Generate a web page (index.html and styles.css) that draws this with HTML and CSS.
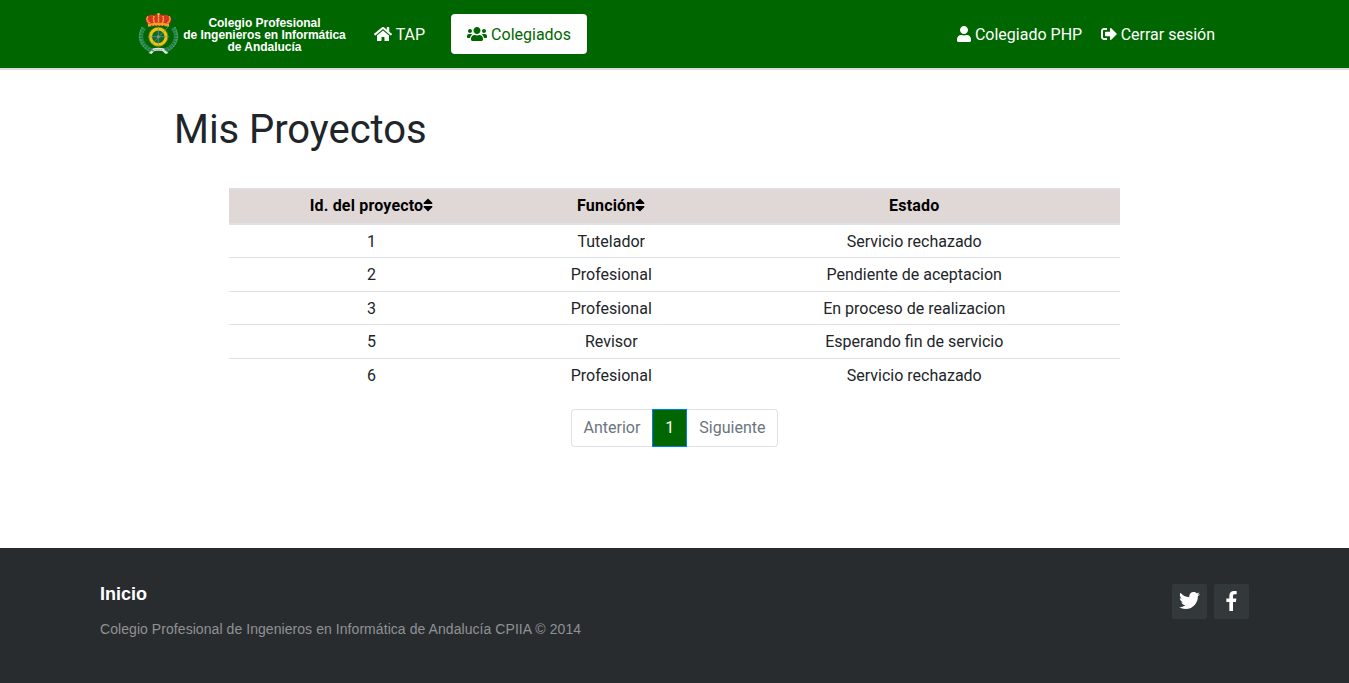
FILE: index.html
```html
<!DOCTYPE html>
<html lang="es">
<head>
<meta charset="utf-8">
<title>Mis Proyectos</title>
<link rel="stylesheet" href="styles.css">
</head>
<body>
<header class="navbar">
  <a class="brand">
    <svg class="emblem" viewBox="0 0 41 42">
      <g fill="none" stroke="#2f8c5c" stroke-width="4.400" stroke-dasharray="2.400 .5">
        <path d="M6 15C0 23 3 33 14 37.500"/>
        <path d="M35 15C41 23 38 33 27 37.500"/>
      </g>
      <g fill="none" stroke="#8bbfa5" stroke-width=".7" stroke-dasharray="1.200 1.300">
        <path d="M4 14C-1 24 2 34 13 39M37 14C42 24 39 34 28 39"/>
      </g>
      <circle cx="20.300" cy="23.700" r="7.900" fill="#0f6a22" stroke="#f0c40c" stroke-width="3.200"/>
      <circle cx="20.300" cy="23.700" r="9.600" fill="none" stroke="#a07c14" stroke-width=".6"/>
      <path d="M20.300 15v18M10 23.700h21M14 31l16-17" stroke="#6f98a0" stroke-width=".7"/>
      <circle cx="20.300" cy="23.700" r="1.500" fill="#7694a2"/>
      <path d="M10 3c-3.500 2-2.500 5.500 0 8.500h21c2.500-3 3.500-6.500 0-8.500-2-1.500-5-1.500-6.500-.5-1-2-7-2-8 0-1.500-1-4.500-1-6.500.5z" fill="#d8341f"/>
      <path d="M10 3.500c-2.500 2 0 5 2 7.500M31 3.500c2.500 2 0 5-2 7.500M16 3c-1 3 0 6 1 8M25 3c1 3 0 6-1 8M20.500 1v10" stroke="#f0bd42" stroke-width="1.500" stroke-dasharray="1.500 .6" fill="none"/>
      <path d="M10 11q10.500-2.500 21 0v2.700q-10.500-2-21 0z" fill="#e9a628"/>
      <path d="M13 12.500h15" stroke="#c7392b" stroke-width="1" stroke-dasharray="1.500 1.500"/>
      <path d="M20.500 0v3M19 1h3" stroke="#f0bd42"/>
      <path d="M14.500 35.500q6-1.500 12 0v3q-6-1.500-12 0zM14.500 37l-4 3 3 1 3-3M26.500 37l4 3-3 1-3-3" fill="#dce5e1"/>
      <path d="M16.500 36.800h8" stroke="#6d7b76" stroke-width=".8" stroke-dasharray="1 .6"/>
    </svg>
    <span class="brand-text">Colegio Profesional<br>de Ingenieros en Informática<br>de Andalucía</span>
  </a>
  <nav class="nav-main">
    <a class="nav-link"><svg class="icon icon-home" viewBox="0 0 576 512"><path d="M280.370 148.260L96 300.110V464a16 16 0 0 0 16 16l112.060-.29a16 16 0 0 0 15.920-16V368a16 16 0 0 1 16-16h64a16 16 0 0 1 16 16v95.640a16 16 0 0 0 16 16.050L464 480a16 16 0 0 0 16-16V300L295.670 148.260a12.190 12.190 0 0 0-15.300 0zM571.600 251.470L488 182.560V44.050a12 12 0 0 0-12-12h-56a12 12 0 0 0-12 12v72.610L318.470 43a48 48 0 0 0-61 0L4.340 251.470a12 12 0 0 0-1.600 16.900l25.500 31A12 12 0 0 0 45.150 301l235.220-193.740a12.190 12.190 0 0 1 15.300 0L530.900 301a12 12 0 0 0 16.900-1.600l25.500-31a12 12 0 0 0-1.700-16.930z"/></svg> TAP</a>
    <a class="nav-link active"><svg class="icon icon-users" viewBox="0 0 640 512"><path d="M96 224c35.300 0 64-28.700 64-64s-28.700-64-64-64-64 28.700-64 64 28.700 64 64 64zm448 0c35.300 0 64-28.700 64-64s-28.700-64-64-64-64 28.700-64 64 28.700 64 64 64zm32 32h-64c-17.600 0-33.500 7.100-45.100 18.600 40.300 22.100 68.900 62 75.100 109.400h66c17.700 0 32-14.300 32-32v-32c0-35.300-28.700-64-64-64zm-256 0c61.900 0 112-50.100 112-112S381.900 32 320 32 208 82.100 208 144s50.100 112 112 112zm76.800 32h-8.300c-20.800 10-43.900 16-68.500 16s-47.600-6-68.500-16h-8.300C179.600 288 128 339.600 128 403.200V432c0 26.500 21.500 48 48 48h288c26.500 0 48-21.500 48-48v-28.800c0-63.600-51.600-115.200-115.200-115.200zm-223.700-13.400C161.500 263.100 145.600 256 128 256H64c-35.300 0-64 28.700-64 64v32c0 17.700 14.300 32 32 32h65.900c6.300-47.400 34.900-87.300 75.200-109.400z"/></svg> Colegiados</a>
  </nav>
  <nav class="nav-user">
    <a><svg class="icon icon-user" viewBox="0 0 448 512"><path d="M224 256c70.700 0 128-57.300 128-128S294.700 0 224 0 96 57.300 96 128s57.300 128 128 128zm89.600 32h-16.700c-22.200 10.200-46.900 16-72.900 16s-50.600-5.800-72.900-16h-16.700C60.200 288 0 348.200 0 422.400V464c0 26.500 21.500 48 48 48h352c26.500 0 48-21.500 48-48v-41.600c0-74.200-60.200-134.400-134.400-134.400z"/></svg> Colegiado PHP</a>
    <a><svg class="icon icon-exit" viewBox="0 0 512 512"><path d="M497 273L329 441c-15 15-41 4.500-41-17v-96H152c-13.300 0-24-10.700-24-24v-96c0-13.300 10.700-24 24-24h136V88c0-21.400 25.900-32 41-17l168 168c9.300 9.400 9.300 24.600 0 34zM192 436v-40c0-6.600-5.400-12-12-12H96c-17.700 0-32-14.300-32-32V160c0-17.700 14.300-32 32-32h84c6.600 0 12-5.400 12-12V76c0-6.600-5.400-12-12-12H96c-53 0-96 43-96 96v192c0 53 43 96 96 96h84c6.600 0 12-5.400 12-12z"/></svg> Cerrar sesión</a>
  </nav>
</header>
<main class="content">
  <h1 class="title">Mis Proyectos</h1>
  <table class="projects">
    <colgroup><col class="col-id"><col class="col-role"><col class="col-state"></colgroup>
    <thead>
      <tr>
        <th>Id. del proyecto<svg class="icon icon-sort" viewBox="0 0 320 512"><path d="M41 288h238c21.400 0 32.100 25.900 17 41L177 448c-9.400 9.400-24.600 9.400-33.900 0L24 329c-15.100-15.100-4.400-41 17-41zm255-105L177 64c-9.400-9.400-24.600-9.400-33.900 0L24 183c-15.100 15.100-4.400 41 17 41h238c21.400 0 32.100-25.900 17-41z"/></svg></th>
        <th>Función<svg class="icon icon-sort" viewBox="0 0 320 512"><path d="M41 288h238c21.400 0 32.100 25.900 17 41L177 448c-9.400 9.400-24.600 9.400-33.900 0L24 329c-15.100-15.100-4.400-41 17-41zm255-105L177 64c-9.400-9.400-24.600-9.400-33.900 0L24 183c-15.100 15.100-4.400 41 17 41h238c21.400 0 32.100-25.900 17-41z"/></svg></th>
        <th>Estado</th>
      </tr>
    </thead>
    <tbody>
      <tr><td>1</td><td>Tutelador</td><td>Servicio rechazado</td></tr>
      <tr><td>2</td><td>Profesional</td><td>Pendiente de aceptacion</td></tr>
      <tr><td>3</td><td>Profesional</td><td>En proceso de realizacion</td></tr>
      <tr><td>5</td><td>Revisor</td><td>Esperando fin de servicio</td></tr>
      <tr><td>6</td><td>Profesional</td><td>Servicio rechazado</td></tr>
    </tbody>
  </table>
  <div class="pagination">
    <span class="page first">Anterior</span>
    <span class="page current">1</span>
    <span class="page last">Siguiente</span>
  </div>
</main>
<footer class="footer">
  <div>
    <p class="footer-link">Inicio</p>
    <p class="footer-copy">Colegio Profesional de Ingenieros en Informática de Andalucía CPIIA © 2014</p>
  </div>
  <div class="social">
    <a class="social-link"><svg class="icon icon-twitter" viewBox="0 0 512 512"><path d="M459.370 151.716c.325 4.548.325 9.097.325 13.645 0 138.720-105.583 298.558-298.558 298.558-59.452 0-114.680-17.219-161.137-47.106 8.447.974 16.568 1.299 25.340 1.299 49.055 0 94.213-16.568 130.274-44.832-46.132-.975-84.792-31.188-98.112-72.772 6.498.974 12.995 1.624 19.818 1.624 9.421 0 18.843-1.300 27.614-3.573-48.081-9.747-84.143-51.980-84.143-102.985v-1.299c13.969 7.797 30.214 12.670 47.431 13.319-28.264-18.843-46.781-51.005-46.781-87.391 0-19.492 5.197-37.360 14.294-52.954 51.655 63.675 129.300 105.258 216.365 109.807-1.624-7.797-2.599-15.918-2.599-24.040 0-57.828 46.782-104.934 104.934-104.934 30.213 0 57.502 12.670 76.670 33.137 23.715-4.548 46.456-13.320 66.599-25.340-7.798 24.366-24.366 44.833-46.132 57.827 21.117-2.273 41.584-8.122 60.426-16.243-14.292 20.791-32.161 39.308-52.628 54.253z"/></svg></a>
    <a class="social-link"><svg class="icon icon-facebook" viewBox="0 0 264 512"><path d="M76.700 512V283H0v-91h76.700v-71.700C76.700 42.400 124.300 0 193.800 0c33.300 0 61.900 2.500 70.200 3.600V85h-48.200c-37.800 0-45.100 18-45.100 44.300V192H256l-11.700 91h-73.600v229"/></svg></a>
  </div>
</footer>
</body>
</html>
```
FILE: styles.css
```css
* { box-sizing: border-box; }
body {
  margin: 0;
  height: 683px;
  overflow: hidden;
  display: flex;
  flex-direction: column;
  font: 400 16px/24px Roboto, sans-serif;
  color: #212529;
  background: #fff;
}
.icon { height: 16px; fill: currentColor; vertical-align: -2px; }
.icon-home { width: 18px; }
.icon-users { width: 20px; }
.icon-user { width: 14px; }
.icon-exit { width: 16px; }
.icon-sort { width: 10px; }
.navbar {
  height: 70px;
  flex: none;
  display: flex;
  align-items: center;
  padding: 0 134px 0 138px;
  background: #006600;
  border-bottom: 2px solid #dcdcdc;
  color: #fff;
  white-space: nowrap;
}
.brand { display: flex; align-items: center; width: 220px; }
.emblem { width: 41px; height: 42px; flex: none; }
.brand-text {
  width: 171px;
  padding-top: 2px;
  font: bold 12px/12px "Liberation Sans", Arial, sans-serif;
  text-align: center;
  letter-spacing: -.03px;
}
.nav-main { display: flex; gap: 10px; }
.nav-link { padding: 9px 16px 7px; border-radius: 4px; }
.nav-link.active { background: #fff; color: #006600; }
.nav-user { display: flex; gap: 18.500px; margin-left: auto; padding-top: 2px; }
.content { flex: none; height: 478px; padding-top: 36px; }
.title { margin: 0 0 34px 174px; font-size: 40px; font-weight: 400; line-height: 48px; letter-spacing: -.04px; }
.projects {
  width: 891px;
  margin: 0 auto;
  table-layout: fixed;
  border-collapse: separate;
  border-spacing: 0;
  text-align: center;
}
.col-id { width: 285px; }
.col-role { width: 194.500px; }
.projects th {
  height: 36.900px;
  padding: 0;
  background: #e0d8d7;
  border-top: 1px solid #dee2e6;
  border-bottom: 2px solid #dee2e6;
  color: #000;
  font-weight: 700;
  letter-spacing: .17px;
}
.projects td { height: 33.500px; padding: 1.600px 0 0; border-bottom: 1px solid #dee2e6; }
.projects tr:last-child td { padding-top: 0; border-bottom: 0; }
.pagination { display: flex; justify-content: center; margin-top: 17px; }
.page {
  height: 38px;
  padding: 6px 12px;
  border: 1px solid #dee2e6;
  color: #6c757d;
}
.page.first { border-radius: 4px 0 0 4px; border-right: 0; }
.page.last { border-radius: 0 4px 4px 0; border-left: 0; }
.page.current { background: #006600; border-color: #007bff; color: #fff; }
.footer {
  flex: 1;
  display: flex;
  justify-content: space-between;
  padding: 36px 100px 0;
  background: #292c2f;
  font-family: "Liberation Sans", Arial, sans-serif;
}
.footer-link { margin: 0; color: #fff; font-size: 18px; font-weight: 700; line-height: 20px; }
.footer-copy { margin: 15px 0 0; color: #8f9296; font-size: 14px; line-height: 21px; letter-spacing: .062px; }
.social { display: flex; gap: 7px; }
.social-link {
  width: 35px;
  height: 35px;
  display: flex;
  justify-content: center;
  padding-top: 7px;
  border-radius: 2px;
  background: #33383b;
  color: #fff;
}
.icon-twitter { width: 21px; height: 21px; margin: -1px 1px 0 0; }
.icon-facebook { width: 11px; height: 20px; }
```
